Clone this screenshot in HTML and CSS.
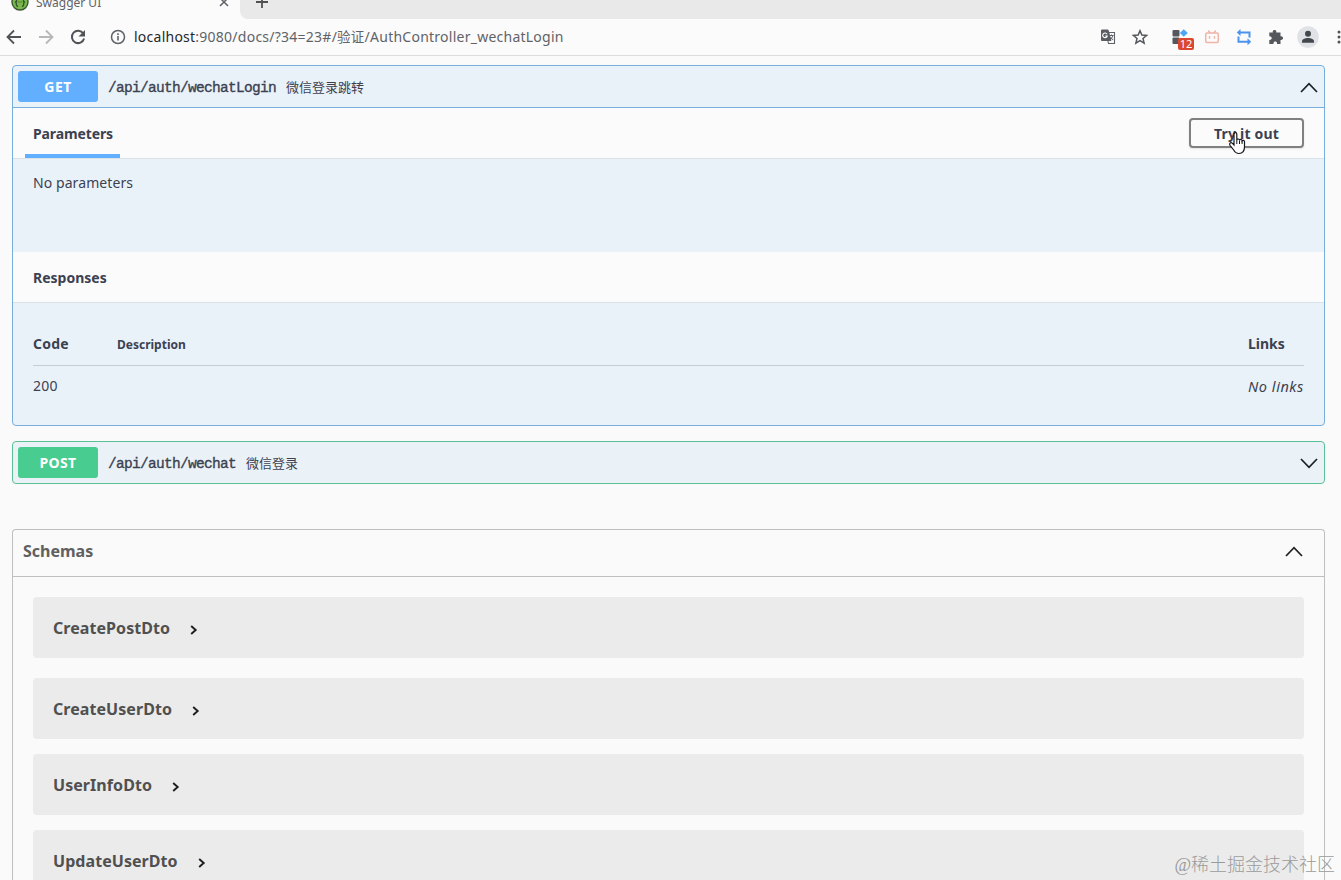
FILE: index.html
```html
<!DOCTYPE html>
<html lang="zh-CN">
<head>
<meta charset="utf-8">
<title>Swagger UI</title>
<link rel="stylesheet" href="styles.css">
</head>
<body>
<header class="browser">
  <div class="tabstrip">
    <div class="tab">
      <svg class="favicon" width="18" height="18" viewBox="0 0 18 18"><circle cx="9" cy="9" r="8" fill="#79b84a" stroke="#3b5935" stroke-width="1.4"/><path d="M7 4.500Q5.200 4.500 5.500 7T4 9q1.500 0 1.300 2T7 13.500M11 4.500q1.800 0 1.500 2.500T14 9q-1.500 0-1.300 2T11 13.500" fill="none" stroke="#34542c" stroke-width="1.300"/><path d="M7 9h.8M8.700 9h.8M10.300 9h.8" stroke="#34542c" stroke-width="1"/></svg>
      <span class="tab-title">Swagger UI</span>
      <svg class="tab-close" width="10" height="10" viewBox="0 0 10 10"><path d="M1 1l8 8M9 1L1 9" stroke="#5f6368" stroke-width="1.500"/></svg>
    </div>
    <div class="tab-rest">
      <svg width="14" height="14" viewBox="0 0 14 14"><path d="M7 1v12M1 7h12" stroke="#505050" stroke-width="1.800"/></svg>
    </div>
  </div>
  <div class="toolbar">
    <div class="nav">
      <svg width="16" height="16" viewBox="0 0 16 16"><path d="M15 8H2M8 1.500L1.500 8 8 14.500" fill="none" stroke="#505357" stroke-width="1.800"/></svg>
      <svg width="16" height="16" viewBox="0 0 16 16"><path d="M1 8h13M8 1.500L14.500 8 8 14.500" fill="none" stroke="#b5b7b9" stroke-width="1.800"/></svg>
      <svg width="16" height="16" viewBox="0 0 16 16"><path d="M13.300 4.500A6.200 6.200 0 1 0 14.100 9.500" fill="none" stroke="#505357" stroke-width="2"/><path d="M15 1v6.500H8.500z" fill="#505357"/></svg>
    </div>
    <svg class="info" width="16" height="16" viewBox="0 0 16 16"><circle cx="8" cy="8" r="6.500" fill="none" stroke="#5f6368" stroke-width="1.500"/><path d="M8 7v4.500M8 4.300v1.700" stroke="#5f6368" stroke-width="1.600"/></svg>
    <div class="url"><span class="host">localhost</span>:9080/docs/?34=23#/<span class="zh">验证</span>/AuthController_wechatLogin</div>
    <div class="extensions">
      <svg width="16" height="16" viewBox="0 0 16 16"><path d="M6 3.500h8.500v11H8.500z" fill="#fafafa" stroke="#5f6368" stroke-width="1.100"/><path d="M1.500 1h6.500l3 10.500H1.500z" fill="#5a5e62" stroke="#5a5e62" stroke-linejoin="round"/><path d="M7 5.200A2.300 2.300 0 1 0 7.200 7H5.200" fill="none" stroke="#fff" stroke-width="1.100"/><path d="M9.500 6.500h4M11.500 5.500v1M13 6.500q-.5 2.500-3 4M10.700 8.300l2.500 2.800" fill="none" stroke="#5f6368"/></svg>
      <svg width="16" height="16" viewBox="0 0 16 16"><path d="M8 1.700l1.900 4.300 4.700.4L11 9.500l1.100 4.600L8 11.600l-4.100 2.500L5 9.500 1.400 6.400l4.700-.4z" fill="none" stroke="#54585c" stroke-width="1.500"/></svg>
      <div class="ext-blocks">
        <svg width="16" height="16" viewBox="0 0 16 16"><rect x="0.500" y="1" width="7" height="6.500" rx="1" fill="#54575b"/><rect x="0.500" y="8.500" width="7" height="6.500" rx="1" fill="#54575b"/><path d="M11.700 .3L15.800 4l-4.100 3.800L7.900 4z" fill="#4ba6f5"/></svg>
        <span class="badge">12</span>
      </div>
      <svg width="16" height="16" viewBox="0 0 16 16"><rect x="1.700" y="4" width="12.600" height="9.500" rx="1.500" fill="none" stroke="#efb3a7" stroke-width="1.500"/><path d="M4.200 1.500L6.300 4M11.800 1.500L9.700 4M5.500 7v2.800M10.500 7v2.800" stroke="#efb3a7" stroke-width="1.400"/></svg>
      <svg width="16" height="16" viewBox="0 0 16 16"><path d="M13.500 8.500V3.500H3M2.500 7.500v5.300H13" fill="none" stroke="#4b94ef" stroke-width="2"/><path d="M4.500 0v7L.8 3.500zM11.500 9.300v7l3.700-3.500z" fill="#4b94ef"/></svg>
      <svg width="16" height="16" viewBox="0 0 16 16"><path d="M1.300 3.500h3.500C4 .2 9 .2 8.300 3.500h4.200v3.800c3.400-.6 3.400 4.200 0 3.600v4H9c.6-3.300-4-3.300-3.500 0H1.300v-4c3.200.2 3.200-3.700 0-3.600z" fill="#54575b"/></svg>
      <svg class="avatar" width="22" height="22" viewBox="0 0 22 22"><circle cx="11" cy="11" r="10.800" fill="#dfe2e7"/><circle cx="11" cy="7.800" r="3" fill="#44474c"/><path d="M5 16.800v-1.500c0-2 3-3.300 6-3.300s6 1.300 6 3.300v1.500z" fill="#44474c"/></svg>
      <svg class="menu" width="4" height="16" viewBox="0 0 4 16"><circle cx="2" cy="3" r="1.500" fill="#505357"/><circle cx="2" cy="8" r="1.500" fill="#505357"/><circle cx="2" cy="13" r="1.500" fill="#505357"/></svg>
    </div>
  </div>
</header>
<main class="page">
  <section class="op op-get">
    <div class="summary">
      <span class="method">GET</span>
      <span class="path">/api/auth/wechatLogin</span>
      <span class="desc">微信登录跳转</span>
      <svg class="arrow" width="18" height="11" viewBox="0 0 18 11"><path d="M1 10L9 1.700l8 8.300" fill="none" stroke="#1b2028" stroke-width="1.700"/></svg>
    </div>
    <div class="section-head">
      <h4 class="active">Parameters</h4>
      <button class="try">Try it out
        <svg class="cursor" width="20" height="24" viewBox="0 0 20 24"><path d="M6 14V3.200c0-2.100 2.800-2.100 2.800 0V9c.5-1.500 2.700-1.200 2.700.2.600-1.200 2.500-.8 2.600.6.700-1 2.400-.6 2.400 1v5c0 4-2 6.700-5.500 6.700-3 0-4-1.200-5.300-3.500L2 14.300c-1.200-2 .8-3.500 2.200-2.200z" fill="#fff" stroke="#15171c" stroke-width="1.200"/><path d="M8.800 9v4M11.500 9.500v3.500M14.100 10v3" stroke="#15171c"/></svg>
      </button>
    </div>
    <div class="params">No parameters</div>
    <div class="section-head plain"><h4>Responses</h4></div>
    <div class="responses">
      <div class="row row-head"><span class="c-code">Code</span><span class="c-desc">Description</span><span class="c-links">Links</span></div>
      <div class="row"><span class="c-code">200</span><span class="c-desc"></span><i class="c-links">No links</i></div>
    </div>
  </section>
  <section class="op op-post">
    <div class="summary">
      <span class="method">POST</span>
      <span class="path">/api/auth/wechat</span>
      <span class="desc">微信登录</span>
      <svg class="arrow" width="18" height="11" viewBox="0 0 18 11"><path d="M1 1l8 8.300L17 1" fill="none" stroke="#1b2028" stroke-width="1.700"/></svg>
    </div>
  </section>
  <section class="schemas">
    <div class="schemas-head">
      <h3>Schemas</h3>
      <svg width="18" height="11" viewBox="0 0 18 11"><path d="M1 10L9 1.700l8 8.300" fill="none" stroke="#202020" stroke-width="1.700"/></svg>
    </div>
    <div class="models">
      <div class="model"><span>CreatePostDto</span><svg width="8" height="10" viewBox="0 0 8 10"><path d="M1.200 1l4.500 4-4.500 4" fill="none" stroke="#1c1c1c" stroke-width="1.900"/></svg></div>
      <div class="model"><span>CreateUserDto</span><svg width="8" height="10" viewBox="0 0 8 10"><path d="M1.200 1l4.500 4-4.500 4" fill="none" stroke="#1c1c1c" stroke-width="1.900"/></svg></div>
      <div class="model"><span>UserInfoDto</span><svg width="8" height="10" viewBox="0 0 8 10"><path d="M1.200 1l4.500 4-4.500 4" fill="none" stroke="#1c1c1c" stroke-width="1.900"/></svg></div>
      <div class="model last"><span>UpdateUserDto</span><svg width="8" height="10" viewBox="0 0 8 10"><path d="M1.200 1l4.500 4-4.500 4" fill="none" stroke="#1c1c1c" stroke-width="1.900"/></svg></div>
    </div>
  </section>
</main>
<div class="watermark">@稀土掘金技术社区</div>
</body>
</html>
```
FILE: styles.css
```css
* { box-sizing: border-box; }
body { display: flex; flex-direction: column; margin: 0; width: 1341px; height: 880px; overflow: hidden; position: relative; background: #fafafa; color: #3b4151; font-family: "Noto Sans", "Noto Sans CJK SC", sans-serif; font-size: 14px; }
h3, h4 { margin: 0; }
svg { display: block; flex: none; }

.browser { flex: none; height: 56px; background: #fbfbfb; border-bottom: 1px solid #dcdcdc; }
.tabstrip { display: flex; height: 19px; background: #fbfbfb; }
.tab { display: flex; width: 240px; height: 19px; padding-left: 11px; }
.favicon { margin-top: -7px; }
.tab-title { width: 183px; margin-left: 7px; margin-top: -6px; font-size: 12px; line-height: 17px; color: #606266; }
.tab-close { margin-top: -3px; }
.tab-rest { flex: 1; height: 19px; padding: 0 0 0 15px; background: #e9e9e9; border-radius: 0 0 0 8px; }
.tab-rest svg { margin-top: -5px; }
.toolbar { display: flex; align-items: center; height: 36px; padding-left: 6px; }
.nav { display: flex; gap: 16px; width: 104px; }
.url { flex: 1; margin-left: 8px; font-size: 14px; letter-spacing: .245px; line-height: 20px; color: #5f6368; white-space: nowrap; }
.host { color: #25282c; }
.zh { font-size: 13.500px; }
.extensions { display: flex; align-items: center; gap: 16px; width: 241px; }
.avatar { margin: 0 -3px; }
.menu { margin-left: 5px; }
.ext-blocks { position: relative; margin-left: 8px; }
.badge { position: absolute; left: 6px; top: 9px; width: 16px; height: 12px; border-radius: 2px; background: #d9482f; color: #fff; font-size: 11px; line-height: 12px; text-align: center; }

.page { display: flex; flex: 1; flex-direction: column; min-height: 0; padding: 9px 16px 0 12px; }
.op { flex: none; border: 1px solid; border-radius: 4px; }
.op-get { height: 361px; border-color: #76aede; background: #eaf2f9; }
.op-post { height: 43px; margin-top: 15px; border-color: #5ac197; background: #eaf2f8; }
.summary { display: flex; align-items: center; height: 41px; padding: 0 6px 0 5px; }
.op-get .summary { height: 42px; border-bottom: 1px solid #76aede; }
.method { width: 80px; height: 31px; border-radius: 3px; color: #fff; font-weight: 700; font-size: 14px; letter-spacing: .4px; line-height: 31px; text-align: center; }
.op-get .method { background: #61affe; }
.op-post .method { background: #49cc90; }
.path { margin-left: 10px; font-family: "Liberation Mono", monospace; font-size: 14.500px; letter-spacing: -.7px; line-height: 20px; padding-top: 2px; -webkit-text-stroke: .35px #3b4151; }
.desc { margin-left: 10px; font-size: 13px; line-height: 20px; }
.arrow { margin-left: auto; margin-top: 2px; }
.section-head { display: flex; justify-content: space-between; height: 51px; padding: 0 20px 0 12px; background: #fbfbfb; border-bottom: 1px solid #dbe1e5; }
.section-head h4 { height: 50px; padding: 0 8px; font-size: 14px; line-height: 51px; }
.section-head h4.active { width: 95px; letter-spacing: -.12px; border-bottom: 4px solid #61affe; }
.try { position: relative; width: 115px; height: 30px; margin-top: 10px; padding: 0; border: 2px solid #808080; border-radius: 4px; background: #fbfbfb; box-shadow: 0 1px 2px rgba(0,0,0,.1); color: #3b4151; font: 700 14px/25px "Noto Sans", sans-serif; letter-spacing: .2px; }
.cursor { position: absolute; left: 37px; top: 11px; }
.params { height: 93px; padding: 14px 20px; line-height: 20px; letter-spacing: .08px; }
.responses { padding: 31px 20px 0; }
.row { display: flex; line-height: 20px; padding-top: 10px; }
.row-head { height: 32px; padding-top: 0; border-bottom: 1px solid #c5ccd4; font-weight: 700; }
.c-code { width: 84px; letter-spacing: .25px; }
.c-desc { flex: 1; padding-top: 1px; font-size: 12px; }
.c-links { width: 56px; white-space: nowrap; }
i.c-links { font-size: 14.500px; letter-spacing: .55px; }

.schemas { display: flex; flex: 1; flex-direction: column; min-height: 0; margin-top: 45px; border: 1px solid #bfbfbf; border-bottom: 0; border-radius: 4px 4px 0 0; }
.schemas-head { display: flex; flex: none; align-items: center; justify-content: space-between; height: 47px; padding: 0 21px 3px 10px; border-bottom: 1px solid #bfbfbf; color: #606060; }
.schemas-head h3 { margin-top: -2px; font-size: 16px; }
.models { display: flex; flex: 1; flex-direction: column; gap: 15px; min-height: 0; padding: 20px 20px 0; }
.model { display: flex; align-items: center; flex: none; gap: 20px; height: 61px; padding-left: 20px; border-radius: 4px; background: #ebebeb; color: #505050; font-size: 16px; font-weight: 700; letter-spacing: .06px; }
.model:first-child { margin-bottom: 5px; }
.model.last { height: 50px; padding-top: 11px; border-radius: 4px 4px 0 0; }
.model svg { margin-top: 4px; }
.watermark { position: absolute; right: 6px; bottom: 2px; font-family: "Liberation Serif", "Noto Sans CJK SC", serif; font-size: 18px; font-weight: 300; line-height: 26px; color: #9b9b9b; white-space: nowrap; }
```
